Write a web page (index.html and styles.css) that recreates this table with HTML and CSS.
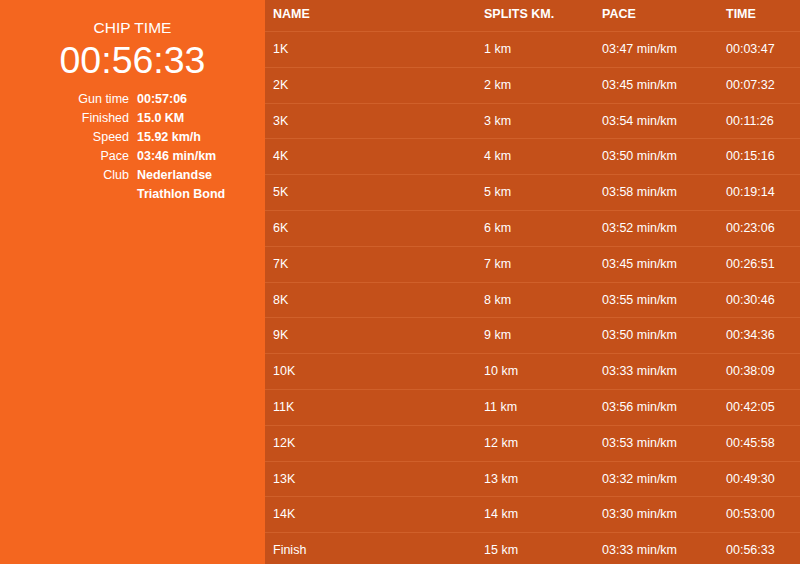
FILE: index.html
```html
<!DOCTYPE html>
<html lang="nl">
<head>
  <meta charset="UTF-8" />
  <title>Splits</title>
  <link rel="stylesheet" href="styles.css">
</head>
<body>
  <div class="page">
    <div class="summary">
      <div class="chip-label">CHIP TIME</div>
      <div class="chip-time">00:56:33</div>
      <table class="details">
        <tr><td class="key">Gun time</td><td class="val">00:57:06</td></tr>
        <tr><td class="key">Finished</td><td class="val">15.0 KM</td></tr>
        <tr><td class="key">Speed</td><td class="val">15.92 km/h</td></tr>
        <tr><td class="key">Pace</td><td class="val">03:46 min/km</td></tr>
        <tr><td class="key">Club</td><td class="val">Nederlandse<br>Triathlon Bond</td></tr>
      </table>
    </div>

    <div class="splits">
      <table class="split-table">
        <thead>
          <tr>
            <th class="c-name">NAME</th>
            <th class="c-km">SPLITS KM.</th>
            <th class="c-pace">PACE</th>
            <th class="c-time">TIME</th>
          </tr>
        </thead>
        <tbody>
          <tr><td>1K</td><td>1 km</td><td>03:47 min/km</td><td>00:03:47</td></tr>
          <tr><td>2K</td><td>2 km</td><td>03:45 min/km</td><td>00:07:32</td></tr>
          <tr><td>3K</td><td>3 km</td><td>03:54 min/km</td><td>00:11:26</td></tr>
          <tr><td>4K</td><td>4 km</td><td>03:50 min/km</td><td>00:15:16</td></tr>
          <tr><td>5K</td><td>5 km</td><td>03:58 min/km</td><td>00:19:14</td></tr>
          <tr><td>6K</td><td>6 km</td><td>03:52 min/km</td><td>00:23:06</td></tr>
          <tr><td>7K</td><td>7 km</td><td>03:45 min/km</td><td>00:26:51</td></tr>
          <tr><td>8K</td><td>8 km</td><td>03:55 min/km</td><td>00:30:46</td></tr>
          <tr><td>9K</td><td>9 km</td><td>03:50 min/km</td><td>00:34:36</td></tr>
          <tr><td>10K</td><td>10 km</td><td>03:33 min/km</td><td>00:38:09</td></tr>
          <tr><td>11K</td><td>11 km</td><td>03:56 min/km</td><td>00:42:05</td></tr>
          <tr><td>12K</td><td>12 km</td><td>03:53 min/km</td><td>00:45:58</td></tr>
          <tr><td>13K</td><td>13 km</td><td>03:32 min/km</td><td>00:49:30</td></tr>
          <tr><td>14K</td><td>14 km</td><td>03:30 min/km</td><td>00:53:00</td></tr>
          <tr><td>Finish</td><td>15 km</td><td>03:33 min/km</td><td>00:56:33</td></tr>
        </tbody>
      </table>
    </div>
  </div>
</body>
</html>
```

FILE: styles.css
```css
html, body {
  margin: 0;
  padding: 0;
  height: 100%;
  overflow: hidden;
}

body {
  font-family: "Liberation Sans", Arial, sans-serif;
  color: #fff;
  background-color: #c4501a;
}

.page {
  display: flex;
  height: 100%;
}

.summary {
  width: 265px;
  flex-shrink: 0;
  background-color: #f4661f;
  text-align: center;
  padding-top: 18px;
}

.chip-label {
  font-size: 15.5px;
  line-height: 20px;
}

.chip-time {
  font-size: 37.5px;
  line-height: 44px;
}

.details {
  border-collapse: collapse;
  margin: 8px 0 0 0;
  width: 100%;
  font-size: 12.5px;
}

.details td {
  padding: 0;
  line-height: 19px;
  vertical-align: top;
}

.details .key {
  width: 129px;
  text-align: right;
  padding-right: 8px;
}

.details .val {
  text-align: left;
  font-weight: bold;
}

.splits {
  flex: 1;
  background-color: #c4501a;
}

.split-table {
  width: 100%;
  border-collapse: collapse;
  font-size: 12.5px;
  text-align: left;
}

.split-table th {
  font-weight: bold;
  padding: 5px 8px 7px;
  line-height: 19px;
}

.split-table td {
  padding: 8px 8px;
  line-height: 18.8px;
  border-top: 1px solid #d0602a;
}

.c-name { width: 195px; }
.c-km { width: 102px; }
.c-pace { width: 108px; }
```
